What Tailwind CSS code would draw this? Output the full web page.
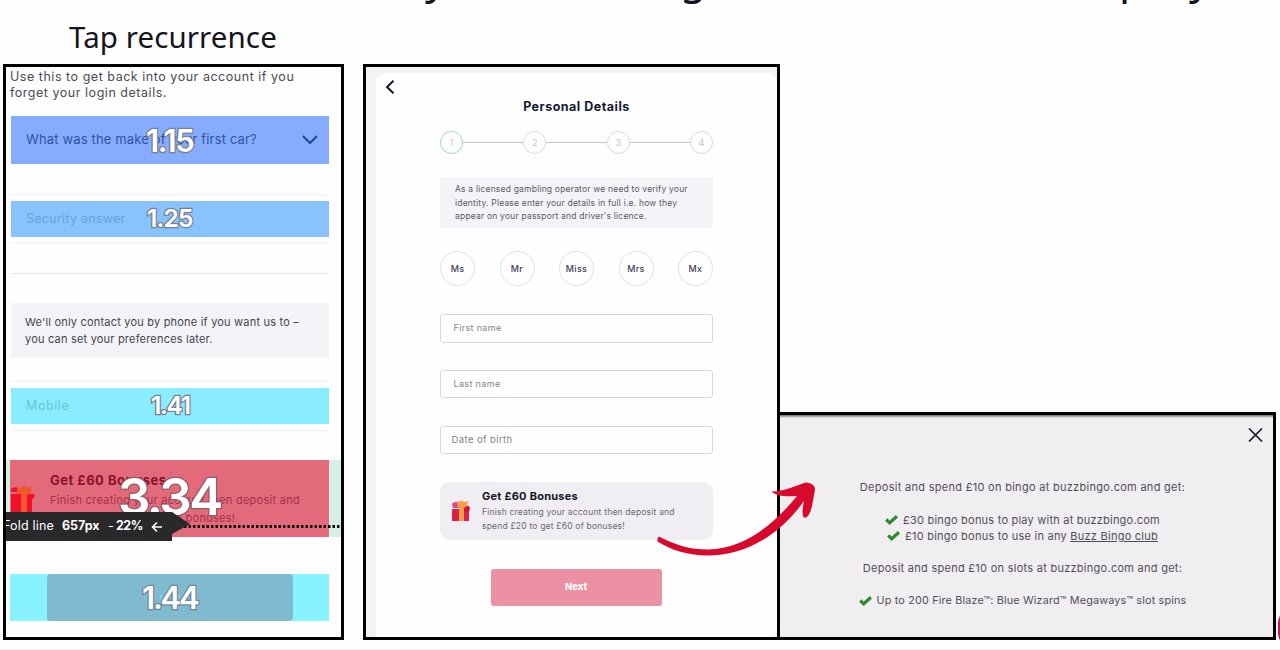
<!DOCTYPE html>
<html lang="en">
<head>
  <meta charset="utf-8">
  <title>Tap recurrence</title>
  <script src="https://cdn.jsdelivr.net/npm/@tailwindcss/browser@4"></script>
</head>
<body class="relative w-[1280px] h-[650px] overflow-hidden bg-[#fefefe] font-['Inter',sans-serif] whitespace-nowrap">
  <!-- slide title, cut by the top edge -->
  <div class="absolute inset-x-0 top-[-55px] font-['Noto_Sans',sans-serif] text-[43px] leading-[64px] text-[#15131c]">
    <span class="absolute left-[425px]">y</span>
    <span class="absolute left-[680px]">g</span>
    <span class="absolute left-[1119px]">p</span>
    <span class="absolute left-[1189px]">y</span>
  </div>

  <header class="h-[64px] pl-[69px] pt-[17px]">
    <h1 class="font-['Noto_Sans',sans-serif] text-[29.5px] leading-[40px] tracking-[0.1px] text-[#15131c]">Tap recurrence</h1>
  </header>

  <main class="flex h-[576px] pl-[3px]">
    <!-- heatmap -->
    <section class="relative w-[341px] shrink-0 border-3 border-black overflow-hidden">
      <div class="ml-[5px] w-[318px]">
        <p class="pt-[2px] -ml-px text-[12.5px] leading-[16px] tracking-[0.53px] text-[#4c4a56]">Use this to get back into your account if you<br>forget your login details.</p>

        <div class="relative mt-[15px] flex h-[48px] items-center justify-between bg-[#86acff] pl-[15px] pr-[11px]">
          <span class="text-[13px] tracking-[0.15px] text-[#31539f]">What was the make of your first car?</span>
          <svg class="w-[16px] h-[10px]" viewBox="0 0 16 10" fill="none" stroke="#24458f" stroke-width="2"><path d="M1 1l7 7 7-7"></path></svg>
          <span class="absolute left-[135px] top-[5px] text-[31px] leading-[40px] font-semibold tracking-[-1.4px] text-white [paint-order:stroke] [-webkit-text-stroke:2.5px_#7b7f8e]">1.15</span>
        </div>

        <div class="mt-[30px] h-[49px] border-y border-[#f3f1f5] py-[6px]">
          <div class="relative flex h-[36px] items-center bg-[#88c2ff] pl-[15px]">
            <span class="pt-px text-[12.5px] tracking-[0.26px] text-[#6aa3df]">Security answer</span>
            <span class="absolute left-[136px] top-[-3px] text-[24.5px] leading-[40px] font-semibold tracking-[-0.8px] text-white [paint-order:stroke] [-webkit-text-stroke:2.5px_#7b7f8e]">1.25</span>
          </div>
        </div>

        <hr class="mt-[30px] border-[#e9e5ec]">

        <p class="mt-[29px] h-[55px] bg-[#f4f3f8] pl-[14px] pt-[11px] text-[11px] leading-[17px] tracking-[0.2px] text-[#45434f]">We'll only contact you by phone if you want us to –<br>you can set your preferences later.</p>

        <div class="mt-[23px] h-[50px] border-y border-[#f3f1f5] py-[6px]">
          <div class="relative flex h-[36px] items-center bg-[#89ecff] pl-[15px]">
            <span class="pt-px text-[12.5px] tracking-[0.6px] text-[#66c8de]">Mobile</span>
            <span class="absolute left-[140px] top-[-3px] text-[24.5px] leading-[40px] font-semibold tracking-[-1.3px] text-white [paint-order:stroke] [-webkit-text-stroke:2.5px_#7b7f8e]">1.41</span>
          </div>
        </div>
      </div>

      <div class="relative mt-[29px] h-[77px] bg-[#d5efe2] pl-[4px]">
        <div class="relative h-full w-[319px] bg-[#e36a7b] pl-[40px] pt-[10px]">
          <svg class="absolute left-0 top-[25px] w-[25px] h-[28px]" viewBox="0 0 25 28">
            <path fill="#e2183a" d="M1 4c4-3 8-2 10 3H1z"></path>
            <path fill="#f0102a" d="M1 9h23q2 3-2 5v14H1z"></path>
            <path fill="#f2552b" d="M8 2l4 1 2-3 3 2 5 0-1 6-4 2v18h-6V9H6z"></path>
          </svg>
          <p class="text-[13px] leading-[20px] font-bold tracking-[0.5px] text-[#8c1029]">Get £60 Bonuses</p>
          <p class="mt-px text-[11px] leading-[18px] tracking-[0.27px] text-[#a3324a]">Finish creating your account then deposit and<br>spend £20 to get £60 of bonuses!</p>
          <span class="absolute left-[108px] top-[5px] text-[51px] leading-[64px] font-semibold tracking-[-2.500px] text-white [paint-order:stroke] [-webkit-text-stroke:2.5px_#8d5f69]">3.34</span>
        </div>
        <svg class="absolute left-[178px] top-[65px] w-[157px] h-[3px]" viewBox="0 0 157 3"><path stroke="#0b0b0d" stroke-width="3" stroke-dasharray="2.500 2" d="M0 1.500h157"></path></svg>
        <!-- fold line tag -->
        <div class="absolute left-0 top-[52px] h-[29px]">
          <svg class="absolute left-0 top-0 w-[184px] h-[29px]" viewBox="0 0 184 29"><path fill="#29282b" d="M0 0h166l18 12-18 10v7H0z"></path></svg>
          <div class="relative flex h-[29px] items-center text-[12.5px] text-white">
            <span class="-ml-[3px] w-[59px] tracking-[0.2px]">Fold line</span>
            <span class="w-[46px] font-bold">657px</span>
            <span class="w-[8px]">-</span>
            <span class="w-[35px] font-bold tracking-[-0.5px]">22%</span>
            <svg class="w-[12px] h-[12px]" viewBox="0 0 12 12" fill="none" stroke="white" stroke-width="1.6"><path d="M11 6H2M6 1.500L1.500 6 6 10.500"></path></svg>
          </div>
        </div>
      </div>

      <div class="relative ml-[4px] mt-[37px] flex h-[47px] w-[319px] justify-center bg-[#88f3ff]">
        <div class="flex w-[246px] items-center justify-center rounded-[4px] bg-[#80bacf] text-[9px] font-bold text-[#76d5e8]">Next</div>
        <span class="absolute left-[132px] top-[4px] text-[31px] leading-[40px] font-semibold tracking-[-2.200px] text-white [paint-order:stroke] [-webkit-text-stroke:2.5px_#74839a]">1.44</span>
      </div>
    </section>

    <!-- personal details form -->
    <section class="relative ml-[19px] w-[417px] shrink-0 border-3 border-black bg-[#f5f3f6] pl-[10px] pt-[6px]">
      <div class="h-full rounded-t-[9px] rounded-br-[9px] bg-[#fefefe] pt-[7px]">
        <svg class="ml-[9px] w-[10px] h-[14px]" viewBox="0 0 10 14" fill="none" stroke="#14182c" stroke-width="2"><path d="M8.500 .7L2 7l6.500 6.300"></path></svg>
        <div class="mx-auto w-[273px]">
          <h2 class="mt-[4px] text-center text-[12.5px] leading-[17px] font-bold tracking-[0.5px] text-[#14182f]">Personal Details</h2>

          <div class="mt-[16px] flex items-center text-[9px] text-[#c6c3cc]">
            <span class="flex size-[23px] items-center justify-center rounded-full border border-[#9adbb9]">1</span>
            <span class="h-[1.5px] flex-1 bg-[#c9c3cf]"></span>
            <span class="flex size-[23px] items-center justify-center rounded-full border border-[#dcd7e2]">2</span>
            <span class="h-[1.5px] flex-1 bg-[#c9c3cf]"></span>
            <span class="flex size-[23px] items-center justify-center rounded-full border border-[#dcd7e2]">3</span>
            <span class="h-[1.5px] flex-1 bg-[#c9c3cf]"></span>
            <span class="flex size-[23px] items-center justify-center rounded-full border border-[#dcd7e2]">4</span>
          </div>

          <p class="mt-[23px] h-[51px] rounded-[3px] bg-[#f4f3f8] pl-[15px] pt-[6px] text-[8.5px] leading-[13.6px] tracking-[0.2px] text-[#5b5965]">As a licensed gambling operator we need to verify your<br>identity. Please enter your details in full i.e. how they<br>appear on your passport and driver's licence.</p>

          <div class="mt-[23px] flex justify-between text-[9px] font-medium tracking-[0.3px] text-[#45415a]">
            <span class="flex size-[35px] items-center justify-center rounded-full border border-[#e3dfe9]">Ms</span>
            <span class="flex size-[35px] items-center justify-center rounded-full border border-[#e3dfe9]">Mr</span>
            <span class="flex size-[35px] items-center justify-center rounded-full border border-[#e3dfe9]">Miss</span>
            <span class="flex size-[35px] items-center justify-center rounded-full border border-[#e3dfe9]">Mrs</span>
            <span class="flex size-[35px] items-center justify-center rounded-full border border-[#e3dfe9]">Mx</span>
          </div>

          <div class="mt-[28px] flex h-[29px] items-center rounded-[3px] border border-[#d9d7dc] pb-px pl-[12.5px] text-[9px] tracking-[0.34px] text-[#85838b]">First name</div>
          <div class="mt-[27px] flex h-[28px] items-center rounded-[3px] border border-[#d9d7dc] pl-[12.5px] text-[9px] tracking-[0.35px] text-[#85838b]">Last name</div>
          <div class="mt-[28px] flex h-[28px] items-center rounded-[3px] border border-[#d9d7dc] pl-[10.5px] text-[9.5px] tracking-[0.4px] text-[#85838b]">Date of birth</div>

          <div class="mt-[28px] flex h-[58px] rounded-[10px] bg-[#f0eef2] pl-[11px]">
            <svg class="mt-[17px] w-[20px] h-[23px]" viewBox="0 0 20 23">
              <path fill="#dd4a85" d="M1 5c2-3 6-3 8 2l-1 2H2z"></path>
              <path fill="#dc1f49" d="M1 10h17v12H1z"></path>
              <path fill="#cf1740" d="M12 8c2-2 6-2 7 1l-1 4h-6z"></path>
              <path fill="#f0a04a" d="M6 2l3 1 1-2 3 2 4-1-1 5-3 2v13H8V9L6 6z"></path>
            </svg>
            <div class="pl-[11px] pt-[7px]">
              <h3 class="text-[11px] leading-[15px] font-bold tracking-[0.25px] text-[#15172b]">Get £60 Bonuses</h3>
              <p class="mt-[2px] text-[8.5px] leading-[13.6px] tracking-[0.2px] text-[#6b6973]">Finish creating your account then deposit and<br>spend £20 to get £60 of bonuses!</p>
            </div>
          </div>

          <div class="mt-[29px] ml-[50.5px] flex h-[37px] w-[171px] items-center justify-center rounded-[3px] bg-[#ec91a3] text-[9.5px] font-extrabold text-white">Next</div>
        </div>
      </div>
    </section>

    <!-- offer details -->
    <section class="relative mt-auto h-[228px] w-[496px] shrink-0 border-3 border-l-0 border-black bg-[#f0eef1]">
      <div class="h-[3px] bg-linear-to-b from-[#6f6d72] to-[#f0eef1]"></div>
      <svg class="absolute right-[10px] top-[12.5px] w-[15px] h-[14px]" viewBox="0 0 15 14" fill="none" stroke="#1b1e2b" stroke-width="1.700"><path d="M1 .5l13 13M14 .5l-13 13"></path></svg>
      <div class="flex flex-col items-center pr-[8px] pt-[61px] text-[11px] leading-[16.25px] tracking-[0.25px] text-[#514f59]">
        <p class="tracking-[0.29px]">Deposit and spend £10 on bingo at buzzbingo.com and get:</p>
        <p class="mt-[16.25px] flex items-center gap-[5px]">
          <svg class="w-[13px] h-[10px]" viewBox="0 0 13 10" fill="none" stroke="#2f8a2c" stroke-width="3.200"><path d="M1.200 4.500l3.500 3.300L12 1.300"></path></svg>
          <span class="tracking-[0.22px]">£30 bingo bonus to play with at buzzbingo.com</span>
        </p>
        <p class="flex items-center gap-[5px]">
          <svg class="w-[13px] h-[10px]" viewBox="0 0 13 10" fill="none" stroke="#2f8a2c" stroke-width="3.200"><path d="M1.200 4.500l3.500 3.300L12 1.300"></path></svg>
          <span>£10 bingo bonus to use in any <a class="underline">Buzz Bingo club</a></span>
        </p>
        <p class="mt-[16.25px] tracking-[0.27px]">Deposit and spend £10 on slots at buzzbingo.com and get:</p>
        <p class="mt-[16.25px] flex items-center gap-[5px] text-[10.8px] tracking-[0.17px]">
          <svg class="w-[13px] h-[10px]" viewBox="0 0 13 10" fill="none" stroke="#2f8a2c" stroke-width="3.200"><path d="M1.200 4.500l3.500 3.300L12 1.300"></path></svg>
          <span>Up to 200 Fire Blaze™: Blue Wizard™ Megaways™ slot spins</span>
        </p>
      </div>
    </section>
  </main>

  <!-- hand-drawn arrow between the two panels -->
  <svg class="absolute left-[650px] top-[475px] w-[175px] h-[90px]" viewBox="650 475 175 90">
    <path fill="#d70a2e" d="M659 536.500C675 545 690 549.500 708 549.500C745 549.500 776 522 797 496C790 496 780 498 771 491.500C783 492 795 486 806 482.500Q815 483 815 490L812 506Q809 519 804 517.500Q801 515 804 501C778 538 742 555.500 708 555.500C688 555.500 671 550 657.500 541.500Q657 538 659 536.500z"></path>
  </svg>

  <div class="absolute left-[1278px] top-[608px] h-[40px] w-[30px] rounded-full bg-[#c81a45]"></div>
  <div class="absolute inset-x-0 bottom-0 h-px bg-[#efedf0]"></div>
</body>
</html>
